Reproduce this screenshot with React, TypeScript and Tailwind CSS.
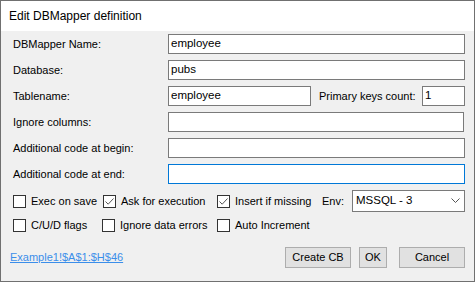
import React from 'react';

const font = { fontFamily: '"Liberation Sans", Arial, sans-serif' };

const TextBox: React.FC<{ value?: string; className?: string; focused?: boolean }> = ({ value = '', className = '', focused }) => (
    <div
        className={`h-[20px] bg-white border flex items-center pl-[2px] text-[11.5px] text-black ${focused ? 'border-[#0078d7]' : 'border-[#7a7a7a]'} ${className}`}
    >
        {value}
    </div>
);

const Check: React.FC<{ checked?: boolean; label: string; className?: string }> = ({ checked, label, className = '' }) => (
    <div className={`flex items-center ${className}`}>
        <div className="w-[13px] h-[13px] border border-[#333333] bg-white flex items-center justify-center shrink-0">
            {checked && (
                <svg width="11" height="11" viewBox="0 0 11 11">
                    <path d="M1.5 5.5 L4.2 8.2 L9.5 2.5" fill="none" stroke="#555" strokeWidth="1" />
                </svg>
            )}
        </div>
        <span className="ml-[5px] text-[11px] text-black whitespace-nowrap">{label}</span>
    </div>
);

const Button: React.FC<{ label: string; className?: string }> = ({ label, className = '' }) => (
    <div className={`h-[21px] bg-[#e1e1e1] border border-[#adadad] flex items-center justify-center text-[11px] text-black ${className}`}>
        {label}
    </div>
);

const Label: React.FC<{ text: string }> = ({ text }) => (
    <span className="w-[156px] pl-[1px] text-[11px] text-black whitespace-nowrap">{text}</span>
);

const App: React.FC = () => {
    const rows = [
        { label: 'DBMapper Name:', value: 'employee' },
        { label: 'Database:', value: 'pubs' },
    ];

    return (
        <div className="w-[476px] h-[283px] bg-white" style={font}>
            <div className="w-[475px] h-[282px] border border-[#707070] flex flex-col">
                {/* Title bar */}
                <div className="h-[30px] bg-white flex items-center pl-[8px] text-[12px] text-black shrink-0">
                    Edit DBMapper definition
                </div>

                {/* Body */}
                <div className="flex-1 bg-[#f0f0f0] pt-[3px] pl-[11px] pr-[9px] flex flex-col">
                    {rows.map(r => (
                        <div key={r.label} className="flex items-center h-[20px] mb-[6px]">
                            <Label text={r.label} />
                            <TextBox value={r.value} className="flex-1" />
                        </div>
                    ))}

                    <div className="flex items-center h-[20px] mb-[6px]">
                        <Label text="Tablename:" />
                        <TextBox value="employee" className="w-[143px]" />
                        <span className="ml-[8px] w-[103px] text-[11px] text-black whitespace-nowrap">Primary keys count:</span>
                        <TextBox value="1" className="flex-1" />
                    </div>

                    <div className="flex items-center h-[20px] mb-[6px]">
                        <Label text="Ignore columns:" />
                        <TextBox className="flex-1 mr-[1px]" />
                    </div>

                    <div className="flex items-center h-[20px] mb-[6px]">
                        <Label text="Additional code at begin:" />
                        <TextBox className="flex-1" />
                    </div>

                    <div className="flex items-center h-[20px] mb-[6px]">
                        <Label text="Additional code at end:" />
                        <TextBox className="flex-1" focused />
                    </div>

                    {/* Checkbox rows */}
                    <div className="flex items-center h-[22px] pl-[1px]">
                        <Check label="Exec on save" className="w-[90px]" />
                        <Check label="Ask for execution" checked className="w-[114px]" />
                        <Check label="Insert if missing" checked className="w-[105px]" />
                        <span className="text-[11px] text-black w-[30px]">Env:</span>
                        <div className="flex-1 h-[22px] bg-white border border-[#7a7a7a] flex items-center pl-[3px] pr-[4px] text-[11.5px] text-black">
                            <span className="flex-1">MSSQL - 3</span>
                            <svg width="9" height="6" viewBox="0 0 9 6">
                                <path d="M0.5 0.5 L4.5 4.5 L8.5 0.5" fill="none" stroke="#555" strokeWidth="1" />
                            </svg>
                        </div>
                    </div>

                    <div className="flex items-center h-[13px] mt-[7px] pl-[1px]">
                        <Check label="C/U/D flags" className="w-[89px]" />
                        <Check label="Ignore data errors" className="w-[115px]" />
                        <Check label="Auto Increment" />
                    </div>

                    {/* Footer */}
                    <div className="flex items-center mt-[15px] h-[21px]">
                        <a className="text-[11px] text-[#3b8eea] underline -ml-[2px] flex-1">Example1!$A$1:$H$46</a>
                        <Button label="Create CB" className="w-[66px]" />
                        <Button label="OK" className="w-[28px] ml-[8px]" />
                        <Button label="Cancel" className="w-[66px] ml-[12px]" />
                    </div>
                </div>
            </div>
        </div>
    );
};

export default App;
